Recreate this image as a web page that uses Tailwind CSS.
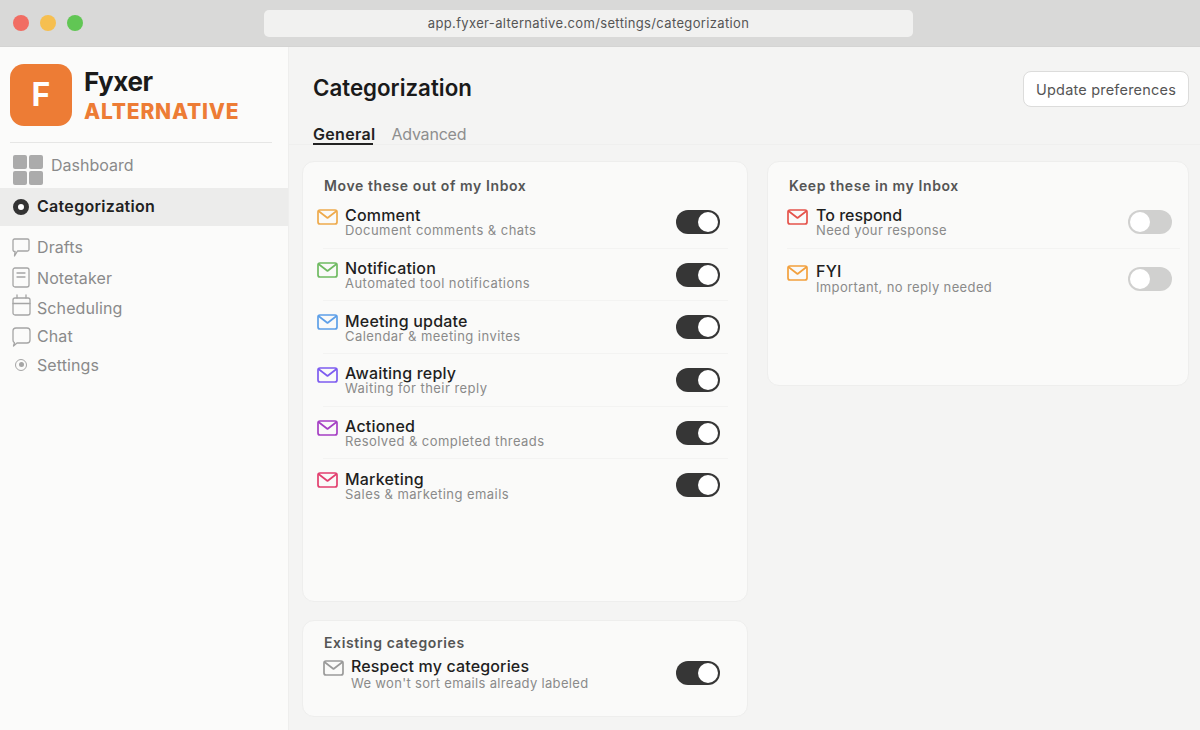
<!DOCTYPE html>
<html lang="en">
<head>
    <meta charset="UTF-8">
    <title>Categorization</title>
    <script src="https://cdn.jsdelivr.net/npm/@tailwindcss/browser@4"></script>
</head>
<body class="w-[1200px] h-[730px] overflow-hidden bg-[#f4f4f3] font-['Inter',sans-serif]">
    <!-- browser chrome -->
    <div class="h-[47px] bg-[#d9d9d8] border-b border-[#d4d4d3] flex items-center relative">
        <div class="flex gap-[11px] pl-[13px]">
            <span class="w-4 h-4 rounded-full bg-[#f16d63]"></span>
            <span class="w-4 h-4 rounded-full bg-[#f6bf50]"></span>
            <span class="w-4 h-4 rounded-full bg-[#61c654]"></span>
        </div>
        <div class="absolute left-[264px] top-[10px] w-[649px] h-[27px] pt-px rounded-[5px] bg-[#f1f1f0] flex items-center justify-center text-[13px] tracking-[0.35px] text-[#555]">app.fyxer-alternative.com/settings/categorization</div>
    </div>

    <div class="flex h-[683px]">
        <!-- sidebar -->
        <aside class="w-[289px] shrink-0 bg-[#fbfbfa] border-r border-[#eeeeed] pt-[17px]">
            <div class="flex items-center pl-[10px]">
                <div class="w-[62px] h-[62px] rounded-[14px] bg-[#ed7c35] flex items-center justify-center text-white text-[32px] font-bold">F</div>
                <div class="ml-3 flex flex-col">
                    <span class="text-[26px] leading-[32px] font-bold tracking-[-0.4px] text-[#1a1a1a]">Fyxer</span>
                    <span class="mt-px text-[21px] leading-[26px] font-extrabold tracking-[0.8px] text-[#ed7c35]">ALTERNATIVE</span>
                </div>
            </div>
            <div class="ml-[10px] w-[262px] h-px bg-[#e6e6e5] mt-4"></div>

            <div class="h-[45px] flex pl-[13px] pt-3 gap-2 text-[16px] leading-[20px] text-[#8a8a8a]">
                <div class="grid grid-cols-2 gap-[2px] w-[30px] h-[30px] shrink-0">
                    <span class="bg-[#ababab] rounded-[2px]"></span>
                    <span class="bg-[#ababab] rounded-[2px]"></span>
                    <span class="bg-[#ababab] rounded-[2px]"></span>
                    <span class="bg-[#ababab] rounded-[2px]"></span>
                </div>
                <span>Dashboard</span>
            </div>

            <div class="h-[38px] bg-[#ececeb] flex items-center pl-[13px] gap-2 text-[16px] font-semibold tracking-[0.3px] text-[#222]">
                <span class="w-4 h-4 rounded-full border-[5px] border-[#333] bg-white"></span>
                <span class="pb-[2px]">Categorization</span>
            </div>

            <div class="text-[16px] tracking-[0.1px] text-[#8a8a8a] pt-[5px]">
                <div class="h-[31px] flex items-center pl-[12px] gap-[7px]">
                    <svg class="mt-[2px]" width="18" height="19" viewBox="0 0 18 19" fill="none" stroke="#a5a5a5" stroke-width="1.3" stroke-linejoin="round"><path d="M2.5 1h13a1.5 1.5 0 0 1 1.5 1.500v9a1.500 1.500 0 0 1-1.500 1.500H5.500L2.500 18l.6-4.500h-.6A1.500 1.500 0 0 1 1 12V2.500A1.500 1.500 0 0 1 2.500 1z"/></svg>
                    <span>Drafts</span>
                </div>
                <div class="h-[31px] flex items-center pl-[12px] gap-[7px]">
                    <svg width="18" height="21" viewBox="0 0 18 21" fill="none" stroke="#a5a5a5" stroke-width="1.3" stroke-linecap="round"><rect x="1" y="1" width="16" height="19" rx="2"/><path d="M5 6h8M5 10h8"/></svg>
                    <span>Notetaker</span>
                </div>
                <div class="h-[29px] flex items-center pl-[12px] gap-[6px]">
                    <svg class="-mt-[5px]" width="19" height="22" viewBox="0 0 19 22" fill="none" stroke="#a5a5a5" stroke-width="1.3" stroke-linecap="round"><rect x="1" y="4" width="17" height="17" rx="2"/><path d="M1 9.500h17M5 1v3M14 1v3"/></svg>
                    <span>Scheduling</span>
                </div>
                <div class="h-[28px] flex items-center pl-[12px] gap-[6px]">
                    <svg class="mt-[2px]" width="19" height="20" viewBox="0 0 19 20" fill="none" stroke="#a5a5a5" stroke-width="1.3" stroke-linejoin="round"><path d="M4 1h11a3 3 0 0 1 3 3v9a3 3 0 0 1-3 3H5L1.500 19l1-3.200A3 3 0 0 1 1 13V4a3 3 0 0 1 3-3z"/></svg>
                    <span>Chat</span>
                </div>
                <div class="h-[29px] flex items-center pl-[15px] gap-[10px]">
                    <span class="w-3 h-3 rounded-full border border-[#a5a5a5] flex items-center justify-center"><span class="w-[5px] h-[5px] rounded-full bg-[#a5a5a5]"></span></span>
                    <span>Settings</span>
                </div>
            </div>
        </aside>

        <!-- main -->
        <main class="flex-1 min-w-0">
            <div class="h-[98px] relative border-b border-[#efefee]">
                <div class="pl-6 pt-[26px] text-[22.300px] leading-[30px] font-semibold text-[#1a1a1a]">Categorization</div>
                <button class="absolute left-[734px] top-[24px] w-[166px] h-9 pt-px rounded-lg bg-white border border-[#dcdcdb] text-[14.500px] tracking-[0.2px] text-[#555]">Update preferences</button>
                <div class="flex gap-4 pl-6 pt-[21px] text-[16px] leading-[20px]">
                    <div class="flex flex-col">
                        <span class="font-semibold tracking-[0.3px] text-[#222]">General</span>
                        <span class="-mt-px w-[60px] h-[2px] bg-[#222]"></span>
                    </div>
                    <span class="tracking-[-0.2px] text-[#8e8e8e]">Advanced</span>
                </div>
            </div>

            <div class="flex gap-[19px] pl-[13px] pt-4 items-start">
                <div class="w-[446px] shrink-0 flex flex-col gap-[18px]">
                    <section class="h-[441px] bg-[#fafaf9] border border-[#eeeeed] rounded-xl pl-[14px] pr-[19px] pt-[15px]">
                        <h2 class="pl-[7px] text-[14px] leading-[17px] font-semibold tracking-[0.6px] text-[#555]">Move these out of my Inbox</h2>
                        <div class="mt-[2px]">
                            <div class="h-[51.700px] flex items-center">
                                <svg class="self-start mt-[13px] shrink-0" width="21" height="16" viewBox="0 0 21 16" fill="none" stroke="#eeaa4c" stroke-width="1.700" stroke-linejoin="round"><rect x="1" y="1" width="19" height="14" rx="2"/><path d="M1.500 2l9 7 9-7"/></svg>
                                <div class="ml-[7px] mt-[2px] flex-1">
                                    <div class="text-[16px] leading-[16px] font-medium tracking-[0.2px] text-[#1f1f1f]">Comment</div>
                                    <div class="text-[13px] leading-[15px] tracking-[0.45px] text-[#8a8a8a]">Document comments & chats</div>
                                </div>
                                <div class="mr-2 w-11 h-6 rounded-full bg-[#363636] flex items-center justify-end pr-[2px]"><span class="w-5 h-5 rounded-full bg-white"></span></div>
                            </div>
                            <div class="ml-[6px] h-px bg-[#f3f3f2]"></div>
                            <div class="h-[51.700px] flex items-center">
                                <svg class="self-start mt-[13px] shrink-0" width="21" height="16" viewBox="0 0 21 16" fill="none" stroke="#6fba62" stroke-width="1.700" stroke-linejoin="round"><rect x="1" y="1" width="19" height="14" rx="2"/><path d="M1.500 2l9 7 9-7"/></svg>
                                <div class="ml-[7px] mt-[2px] flex-1">
                                    <div class="text-[16px] leading-[16px] font-medium tracking-[0.2px] text-[#1f1f1f]">Notification</div>
                                    <div class="text-[13px] leading-[15px] tracking-[0.45px] text-[#8a8a8a]">Automated tool notifications</div>
                                </div>
                                <div class="mr-2 w-11 h-6 rounded-full bg-[#363636] flex items-center justify-end pr-[2px]"><span class="w-5 h-5 rounded-full bg-white"></span></div>
                            </div>
                            <div class="ml-[6px] h-px bg-[#f3f3f2]"></div>
                            <div class="h-[51.700px] flex items-center">
                                <svg class="self-start mt-[13px] shrink-0" width="21" height="16" viewBox="0 0 21 16" fill="none" stroke="#5d9fe8" stroke-width="1.700" stroke-linejoin="round"><rect x="1" y="1" width="19" height="14" rx="2"/><path d="M1.500 2l9 7 9-7"/></svg>
                                <div class="ml-[7px] mt-[2px] flex-1">
                                    <div class="text-[16px] leading-[16px] font-medium tracking-[0.2px] text-[#1f1f1f]">Meeting update</div>
                                    <div class="text-[13px] leading-[15px] tracking-[0.45px] text-[#8a8a8a]">Calendar & meeting invites</div>
                                </div>
                                <div class="mr-2 w-11 h-6 rounded-full bg-[#363636] flex items-center justify-end pr-[2px]"><span class="w-5 h-5 rounded-full bg-white"></span></div>
                            </div>
                            <div class="ml-[6px] h-px bg-[#f3f3f2]"></div>
                            <div class="h-[51.700px] flex items-center">
                                <svg class="self-start mt-[13px] shrink-0" width="21" height="16" viewBox="0 0 21 16" fill="none" stroke="#7d5cf0" stroke-width="1.700" stroke-linejoin="round"><rect x="1" y="1" width="19" height="14" rx="2"/><path d="M1.500 2l9 7 9-7"/></svg>
                                <div class="ml-[7px] mt-[2px] flex-1">
                                    <div class="text-[16px] leading-[16px] font-medium tracking-[0.2px] text-[#1f1f1f]">Awaiting reply</div>
                                    <div class="text-[13px] leading-[15px] tracking-[0.45px] text-[#8a8a8a]">Waiting for their reply</div>
                                </div>
                                <div class="mr-2 w-11 h-6 rounded-full bg-[#363636] flex items-center justify-end pr-[2px]"><span class="w-5 h-5 rounded-full bg-white"></span></div>
                            </div>
                            <div class="ml-[6px] h-px bg-[#f3f3f2]"></div>
                            <div class="h-[51.700px] flex items-center">
                                <svg class="self-start mt-[13px] shrink-0" width="21" height="16" viewBox="0 0 21 16" fill="none" stroke="#a53fc4" stroke-width="1.700" stroke-linejoin="round"><rect x="1" y="1" width="19" height="14" rx="2"/><path d="M1.500 2l9 7 9-7"/></svg>
                                <div class="ml-[7px] mt-[2px] flex-1">
                                    <div class="text-[16px] leading-[16px] font-medium tracking-[0.2px] text-[#1f1f1f]">Actioned</div>
                                    <div class="text-[13px] leading-[15px] tracking-[0.45px] text-[#8a8a8a]">Resolved & completed threads</div>
                                </div>
                                <div class="mr-2 w-11 h-6 rounded-full bg-[#363636] flex items-center justify-end pr-[2px]"><span class="w-5 h-5 rounded-full bg-white"></span></div>
                            </div>
                            <div class="ml-[6px] h-px bg-[#f3f3f2]"></div>
                            <div class="h-[51.700px] flex items-center">
                                <svg class="self-start mt-[13px] shrink-0" width="21" height="16" viewBox="0 0 21 16" fill="none" stroke="#e23f6f" stroke-width="1.700" stroke-linejoin="round"><rect x="1" y="1" width="19" height="14" rx="2"/><path d="M1.500 2l9 7 9-7"/></svg>
                                <div class="ml-[7px] mt-[2px] flex-1">
                                    <div class="text-[16px] leading-[16px] font-medium tracking-[0.2px] text-[#1f1f1f]">Marketing</div>
                                    <div class="text-[13px] leading-[15px] tracking-[0.45px] text-[#8a8a8a]">Sales & marketing emails</div>
                                </div>
                                <div class="mr-2 w-11 h-6 rounded-full bg-[#363636] flex items-center justify-end pr-[2px]"><span class="w-5 h-5 rounded-full bg-white"></span></div>
                            </div>
                        </div>
                    </section>

                    <section class="h-[97px] bg-[#fafaf9] border border-[#eeeeed] rounded-xl pl-[20px] pr-[27px] pt-[13px]">
                        <h2 class="pl-px text-[14px] leading-[17px] font-semibold tracking-[0.6px] text-[#555]">Existing categories</h2>
                        <div class="mt-[7px] flex">
                            <svg class="mt-[2px] shrink-0" width="21" height="16" viewBox="0 0 21 16" fill="none" stroke="#9a9a9a" stroke-width="1.700" stroke-linejoin="round"><rect x="1" y="1" width="19" height="14" rx="2"/><path d="M1.500 2l9 7 9-7"/></svg>
                            <div class="ml-[7px] flex-1">
                                <div class="text-[16px] leading-[17px] font-medium tracking-[0.15px] text-[#1f1f1f]">Respect my categories</div>
                                <div class="mt-px text-[13px] leading-[15px] tracking-[0.33px] text-[#8a8a8a]">We won't sort emails already labeled</div>
                            </div>
                            <div class="mt-[3px] w-11 h-6 rounded-full bg-[#363636] flex items-center justify-end pr-[2px]"><span class="w-5 h-5 rounded-full bg-white"></span></div>
                        </div>
                    </section>
                </div>

                <section class="w-[422px] shrink-0 h-[225px] bg-[#fafaf9] border border-[#eeeeed] rounded-xl pl-[19px] pr-2 pt-[15px]">
                    <h2 class="pl-[2px] text-[14px] leading-[17px] font-semibold tracking-[0.6px] text-[#555]">Keep these in my Inbox</h2>
                    <div class="mt-[2px]">
                        <div class="h-[51.700px] flex items-center">
                            <svg class="self-start mt-[13px] shrink-0" width="21" height="16" viewBox="0 0 21 16" fill="none" stroke="#e5534b" stroke-width="1.700" stroke-linejoin="round"><rect x="1" y="1" width="19" height="14" rx="2"/><path d="M1.500 2l9 7 9-7"/></svg>
                            <div class="ml-2 mt-[2px] flex-1">
                                <div class="text-[16px] leading-[16px] font-medium text-[#1f1f1f]">To respond</div>
                                <div class="text-[13px] leading-[15px] tracking-[0.35px] text-[#8a8a8a]">Need your response</div>
                            </div>
                            <div class="mr-2 w-11 h-6 rounded-full bg-[#d0d0cf] flex items-center pl-[2px]"><span class="w-5 h-5 rounded-full bg-white"></span></div>
                        </div>
                        <div class="h-px bg-[#f3f3f2]"></div>
                        <div class="h-[60px] flex items-center">
                            <svg class="self-start mt-[16px] shrink-0" width="21" height="16" viewBox="0 0 21 16" fill="none" stroke="#f2a03d" stroke-width="1.700" stroke-linejoin="round"><rect x="1" y="1" width="19" height="14" rx="2"/><path d="M1.500 2l9 7 9-7"/></svg>
                            <div class="ml-2 flex-1">
                                <div class="text-[16px] leading-[17px] font-medium tracking-[0.2px] text-[#1f1f1f]">FYI</div>
                                <div class="text-[13px] leading-[15px] tracking-[0.37px] text-[#8a8a8a]">Important, no reply needed</div>
                            </div>
                            <div class="mr-2 w-11 h-6 rounded-full bg-[#d0d0cf] flex items-center pl-[2px]"><span class="w-5 h-5 rounded-full bg-white"></span></div>
                        </div>
                    </div>
                </section>
            </div>
        </main>
    </div>
</body>
</html>
